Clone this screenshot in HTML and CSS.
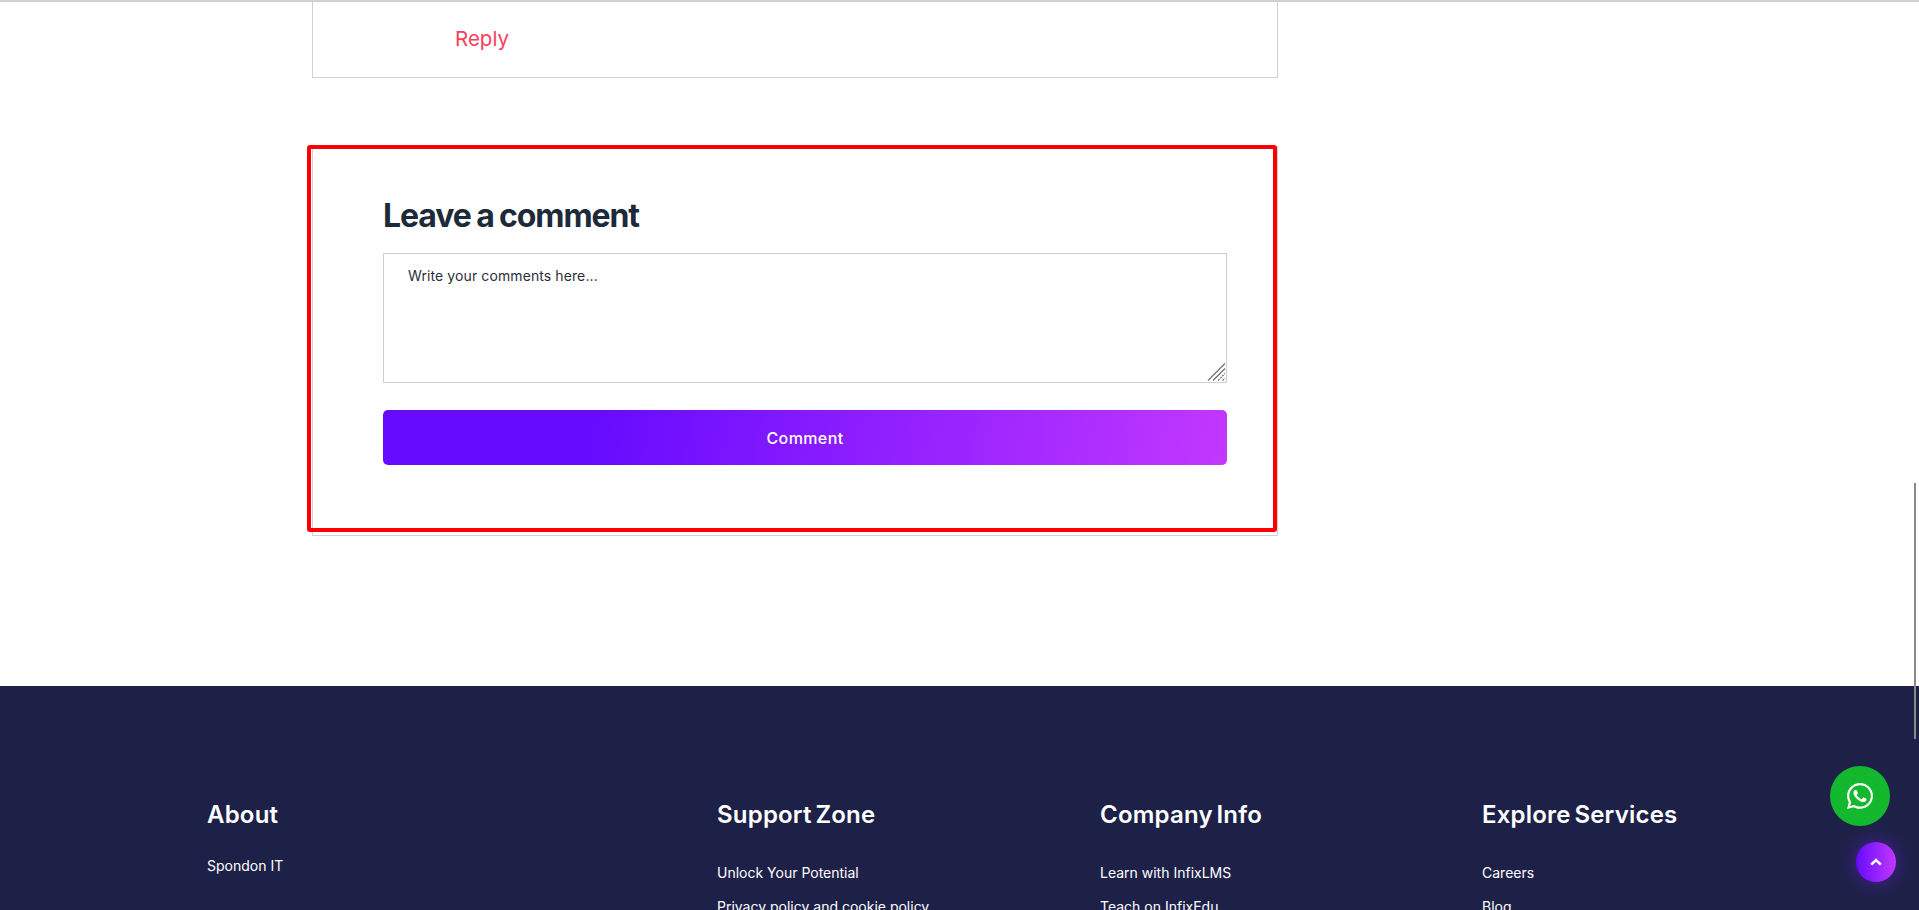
FILE: index.html
```html
<!DOCTYPE html>
<html lang="en">
<head>
<meta charset="utf-8">
<title>Leave a comment</title>
<link rel="stylesheet" href="styles.css">
</head>
<body>
<div class="page">
  <main class="content">
    <section class="comment-card">
      <a class="reply" href="#">Reply</a>
    </section>
    <section class="form-card">
      <div class="highlight"></div>
      <h2 class="form-title">Leave a comment</h2>
      <div class="form-field">
        <textarea class="form-input" placeholder="Write your comments here..."></textarea>
        <svg class="form-resizer" viewBox="0 0 19 18" aria-hidden="true">
          <path class="resizer-solid" d="M1 17.5 18 .5M6 17.5 18 5.5"/>
          <path class="resizer-dashed" d="M11 17.5l7-7M15.5 17.5l2.500-2.500"/>
        </svg>
      </div>
      <button class="form-button" type="button">Comment</button>
    </section>
  </main>
  <footer class="footer">
    <div class="footer-col">
      <h3 class="footer-title">About</h3>
      <p class="footer-about">Spondon IT</p>
    </div>
    <div class="footer-col">
      <h3 class="footer-title">Support Zone</h3>
      <ul class="footer-links">
        <li>Unlock Your Potential</li>
        <li>Privacy policy and cookie policy</li>
      </ul>
    </div>
    <div class="footer-col">
      <h3 class="footer-title">Company Info</h3>
      <ul class="footer-links">
        <li>Learn with InfixLMS</li>
        <li>Teach on InfixEdu</li>
      </ul>
    </div>
    <div class="footer-col">
      <h3 class="footer-title">Explore Services</h3>
      <ul class="footer-links">
        <li>Careers</li>
        <li>Blog</li>
      </ul>
    </div>
  </footer>
</div>
<div class="scroll-thumb"></div>
<a class="whatsapp" href="#" aria-label="WhatsApp">
  <svg class="whatsapp-icon" viewBox="0 32 448 448" aria-hidden="true"><path fill="#fff" d="M380.9 97.1C339 55.1 283.2 32 223.9 32c-122.4 0-222 99.6-222 222 0 39.1 10.2 77.3 29.6 111L0 480l117.7-30.9c32.4 17.7 68.9 27 106.1 27h.1c122.3 0 224.1-99.6 224.1-222 0-59.3-25.2-115-67.1-157zm-157 341.6c-33.2 0-65.7-8.9-94-25.7l-6.7-4-69.8 18.3L72 359.2l-4.4-7c-18.5-29.4-28.2-63.3-28.2-98.2 0-101.7 82.8-184.5 184.6-184.5 49.3 0 95.6 19.2 130.4 54.1 34.8 34.9 56.2 81.2 56.1 130.5 0 101.8-84.9 184.6-186.6 184.6zm101.2-138.2c-5.5-2.8-32.8-16.2-37.9-18-5.1-1.9-8.8-2.8-12.5 2.8-3.7 5.6-14.3 18-17.6 21.8-3.2 3.7-6.5 4.2-12 1.4-32.6-16.3-54-29.1-75.5-66-5.7-9.8 5.7-9.1 16.3-30.3 1.8-3.7.9-6.9-.5-9.7-1.4-2.8-12.5-30.1-17.1-41.2-4.5-10.8-9.1-9.3-12.5-9.5-3.2-.2-6.9-.2-10.6-.2-3.7 0-9.7 1.4-14.8 6.9-5.1 5.6-19.4 19-19.4 46.3 0 27.3 19.9 53.7 22.6 57.4 2.8 3.7 39.1 59.7 94.8 83.8 35.2 15.2 49 16.5 66.6 13.9 10.7-1.6 32.8-13.4 37.4-26.4 4.6-13 4.6-24.1 3.2-26.4-1.3-2.5-5-3.9-10.5-6.6z"/></svg>
</a>
<a class="to-top" href="#" aria-label="Back to top">
  <svg class="to-top-icon" viewBox="0 0 12 8" aria-hidden="true"><path d="M1.200 6.600 6 2l4.800 4.600" fill="none" stroke="#fff" stroke-width="2.600"/></svg>
</a>
</body>
</html>
```
FILE: styles.css
```css
* { box-sizing: border-box; }
html, body { margin: 0; height: 910px; overflow: hidden; background: #fff; }
body { font-family: Inter, "Liberation Sans", sans-serif; color: #1f2b3d; }

.page { height: 910px; overflow: hidden; border-top: 2px solid #d0d0d0; }
.content { width: 966px; margin-left: 312px; height: 684px; }

.comment-card {
  height: 76px;
  border: 1px solid #d0d0d0;
  border-top: 0;
  padding: 25px 0 0 142px;
}
.reply { color: #f9405a; font-size: 20.500px; line-height: 24px; text-decoration: none; }

.form-card {
  position: relative;
  margin-top: 68px;
  height: 390px;
  border: 1px solid #d0d0d0;
  border-width: 0 1px 1px 1px;
  padding: 47px 50px 0 70px;
}
.highlight {
  position: absolute;
  left: -6px;
  top: -1px;
  width: 970px;
  height: 387px;
  border: 4px solid #ff0000;
  border-radius: 3px;
  pointer-events: none;
}
.form-title {
  margin: 0 0 14px;
  font-size: 32px;
  line-height: 46px;
  font-weight: 700;
  letter-spacing: -1.1px;
  word-spacing: -1px;
  color: #1c2a3a;
}
.form-field { position: relative; width: 844px; height: 130px; }
.form-input {
  display: block;
  width: 844px;
  height: 130px;
  padding: 12px 24px;
  border: 1px solid #cfcfcf;
  border-radius: 0;
  outline: 0;
  resize: none;
  font-family: inherit;
  font-size: 14px;
  line-height: 20px;
  letter-spacing: 0.1px;
}
.form-input::placeholder { color: #2b2f3a; opacity: 1; }
.form-resizer {
  position: absolute;
  right: 1px;
  bottom: 2px;
  width: 19px;
  height: 18px;
  fill: none;
  stroke: #757575;
  stroke-width: 1.300;
}
.resizer-dashed { stroke-dasharray: 2 1; }
.form-button {
  display: block;
  width: 844px;
  height: 55px;
  margin-top: 27px;
  border: 0;
  border-radius: 5px;
  background: linear-gradient(100deg, #660bff 25%, #c238ff 100%);
  color: #fff;
  font-family: inherit;
  font-size: 16px;
  font-weight: 500;
  letter-spacing: 0.4px;
}

.footer {
  display: grid;
  grid-template-columns: 510px 383px 382px 1fr;
  height: 224px;
  padding: 111px 0 0 207px;
  background: #1e2147;
  color: #fff;
}
.footer-title {
  margin: 0;
  font-size: 24px;
  line-height: 36px;
  font-weight: 600;
  letter-spacing: 0.2px;
  word-spacing: -2.500px;
}
.footer-about { margin: 23px 0 0; font-size: 14px; line-height: 20px; }
.footer-links { margin: 30px 0 0; padding: 0; list-style: none; font-size: 14px; line-height: 20px; }
.footer-links li { margin-bottom: 14px; }

.scroll-thumb {
  position: fixed;
  left: 1914px;
  top: 483px;
  width: 2px;
  height: 256px;
  background: #8a8a8a;
}
.whatsapp {
  position: fixed;
  left: 1830px;
  top: 766px;
  width: 60px;
  height: 60px;
  display: flex;
  align-items: center;
  justify-content: center;
  border-radius: 50%;
  background: #14b82e;
}
.whatsapp-icon { width: 26px; height: 26px; }
.to-top {
  position: fixed;
  left: 1856px;
  top: 842px;
  width: 40px;
  height: 40px;
  display: flex;
  align-items: center;
  justify-content: center;
  border-radius: 50%;
  background: linear-gradient(90deg, #660bff, #c238ff);
  box-shadow: 0 0 20px rgba(124, 30, 255, 0.5);
}
.to-top-icon { width: 12px; height: 8px; }
```
